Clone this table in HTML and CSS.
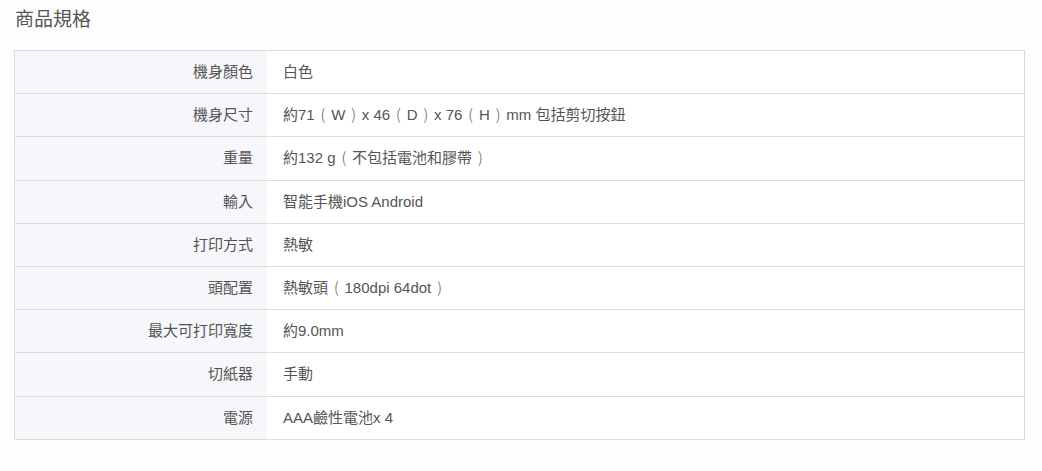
FILE: index.html
```html
<!DOCTYPE html>
<html lang="zh-Hant">
<head>
<meta charset="utf-8">
<link rel="stylesheet" href="styles.css">
</head>
<body>
<div class="page">
  <h2 class="title">商品規格</h2>
  <div class="specs">
    <div class="row"><div class="label">機身顏色</div><div class="value">白色</div></div>
    <div class="row"><div class="label">機身尺寸</div><div class="value">約71<span class="p">(</span>W<span class="p">)</span>x 46<span class="p">(</span>D<span class="p">)</span>x 76<span class="p">(</span>H<span class="p">)</span>mm 包括剪切按鈕</div></div>
    <div class="row"><div class="label">重量</div><div class="value">約132 g<span class="p">(</span>不包括電池和膠帶<span class="p">)</span></div></div>
    <div class="row"><div class="label">輸入</div><div class="value">智能手機iOS Android</div></div>
    <div class="row"><div class="label">打印方式</div><div class="value">熱敏</div></div>
    <div class="row"><div class="label">頭配置</div><div class="value">熱敏頭<span class="p">(</span>180dpi 64dot<span class="p">)</span></div></div>
    <div class="row"><div class="label">最大可打印寬度</div><div class="value">約9.0mm</div></div>
    <div class="row"><div class="label">切紙器</div><div class="value">手動</div></div>
    <div class="row"><div class="label">電源</div><div class="value">AAA鹼性電池x 4</div></div>
  </div>
</div>
</body>
</html>
```
FILE: styles.css
```css
html, body {
  margin: 0;
  padding: 0;
  background: #fdfdfd;
}
body {
  font-family: "Liberation Sans", "Noto Sans CJK TC", sans-serif;
  color: #555;
}
.page {
  padding: 8px 17px 0 14px;
}
.title {
  margin: 0 0 0 1px;
  font-size: 19px;
  font-weight: normal;
  line-height: 24px;
  color: #555;
  height: 42px;
}
.specs {
  border: 1px solid #dcdcdc;
  background: #fff;
}
.row {
  display: grid;
  grid-template-columns: 252px 1fr;
  border-bottom: 1px solid #dcdcdc;
  font-size: 15px;
  line-height: 22.2px;
}
.row:last-child {
  border-bottom: none;
}
.label {
  background: #f5f7fa;
  text-align: right;
  padding: 10px 14px 10px 0;
  color: #555;
}
.value {
  padding: 10px 16px;
  color: #555;
}
.p {
  display: inline-block;
  width: 16.5px;
  line-height: 15px;
  text-align: center;
  font-family: "Noto Sans CJK TC", sans-serif;
  font-weight: 300;
}
```
